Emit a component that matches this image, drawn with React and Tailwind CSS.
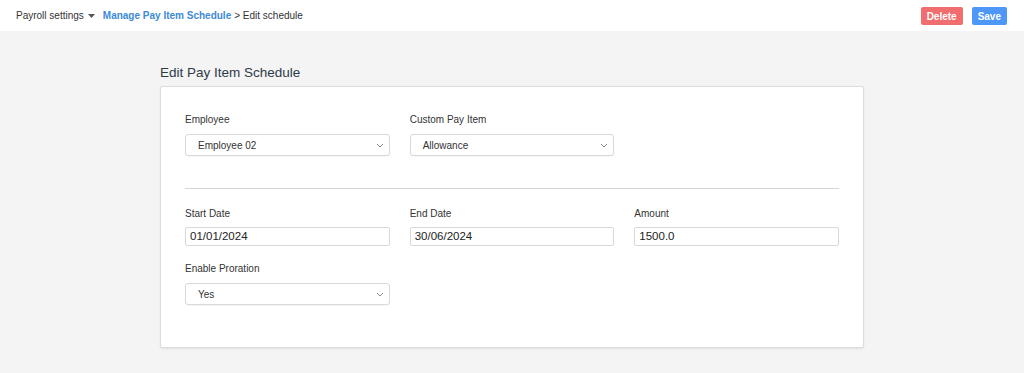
function Chevron() {
  return (
    <svg width="8" height="5" viewBox="0 0 8 5" className="shrink-0">
      <path d="M1 1l3 3 3-3" fill="none" stroke="#8a8a8a" strokeWidth="1" />
    </svg>
  );
}

function Field({ label, tight, children }) {
  return (
    <div className="flex flex-col">
      <label className={tight ? "text-[10px] text-[#333] leading-[14px] mb-[6px]" : "text-[10px] text-[#333] leading-[14px] mb-[7px]"}>
        {label}
      </label>
      {children}
    </div>
  );
}

function Select({ value }) {
  return (
    <div className="h-[22px] flex items-center justify-between border border-[#d9d9d9] rounded-[3px] bg-white pl-[12px] pr-[5px] shadow-[0_1px_1px_rgba(0,0,0,0.04)]">
      <span className="text-[10px] text-[#333]">{value}</span>
      <Chevron />
    </div>
  );
}

function Input({ value }) {
  return (
    <div className="h-[19px] flex items-center border border-[#d9d9d9] rounded-[2px] bg-white px-[4px]">
      <span className="text-[11.5px] text-[#222]">{value}</span>
    </div>
  );
}

export default function App() {
  return (
    <div className="w-[1024px] h-[373px] bg-[#f4f4f4] font-['Liberation_Sans',Arial,sans-serif] overflow-hidden">
      <header className="h-[31px] bg-white flex items-center justify-between pl-[16px] pr-[17px]">
        <div className="flex items-center text-[10px] text-[#333]">
          <span>Payroll settings</span>
          <svg width="7" height="4" viewBox="0 0 7 4" className="ml-[4px] mr-[8px]">
            <path d="M0 0h7L3.5 4z" fill="#555" />
          </svg>
          <span className="font-bold text-[#3d8ad6]">Manage Pay Item Schedule</span>
          <span className="ml-[3px]">&gt; Edit schedule</span>
        </div>
        <div className="flex items-center gap-[9px] pt-[1px]">
          <button className="h-[18px] px-[6px] rounded-[2px] bg-[#f26d6d] text-white text-[10px] font-bold">
            Delete
          </button>
          <button className="h-[18px] px-[6px] rounded-[2px] bg-[#4c97f8] text-white text-[10px] font-bold">
            Save
          </button>
        </div>
      </header>

      <main className="w-[704px] mx-auto pt-[33px]">
        <h1 className="text-[13.5px] text-[#2d3a48] leading-[18px] mb-[4px]">Edit Pay Item Schedule</h1>
        <div className="bg-white border border-[#dcdcdc] rounded-[2px] shadow-[0_1px_2px_rgba(0,0,0,0.08)] px-[24px] pt-[26px] h-[262px]">
          <div className="grid grid-cols-3 gap-x-[20px]">
            <Field label="Employee">
              <Select value="Employee 02" />
            </Field>
            <Field label="Custom Pay Item">
              <Select value="Allowance" />
            </Field>
          </div>
          <div className="border-t border-[#d6d6d6] mt-[32px] mb-[18px]" />
          <div className="grid grid-cols-3 gap-x-[20px] gap-y-[16px]">
            <Field label="Start Date" tight>
              <Input value="01/01/2024" />
            </Field>
            <Field label="End Date" tight>
              <Input value="30/06/2024" />
            </Field>
            <Field label="Amount" tight>
              <Input value="1500.0" />
            </Field>
            <Field label="Enable Proration">
              <Select value="Yes" />
            </Field>
          </div>
        </div>
      </main>
    </div>
  );
}
